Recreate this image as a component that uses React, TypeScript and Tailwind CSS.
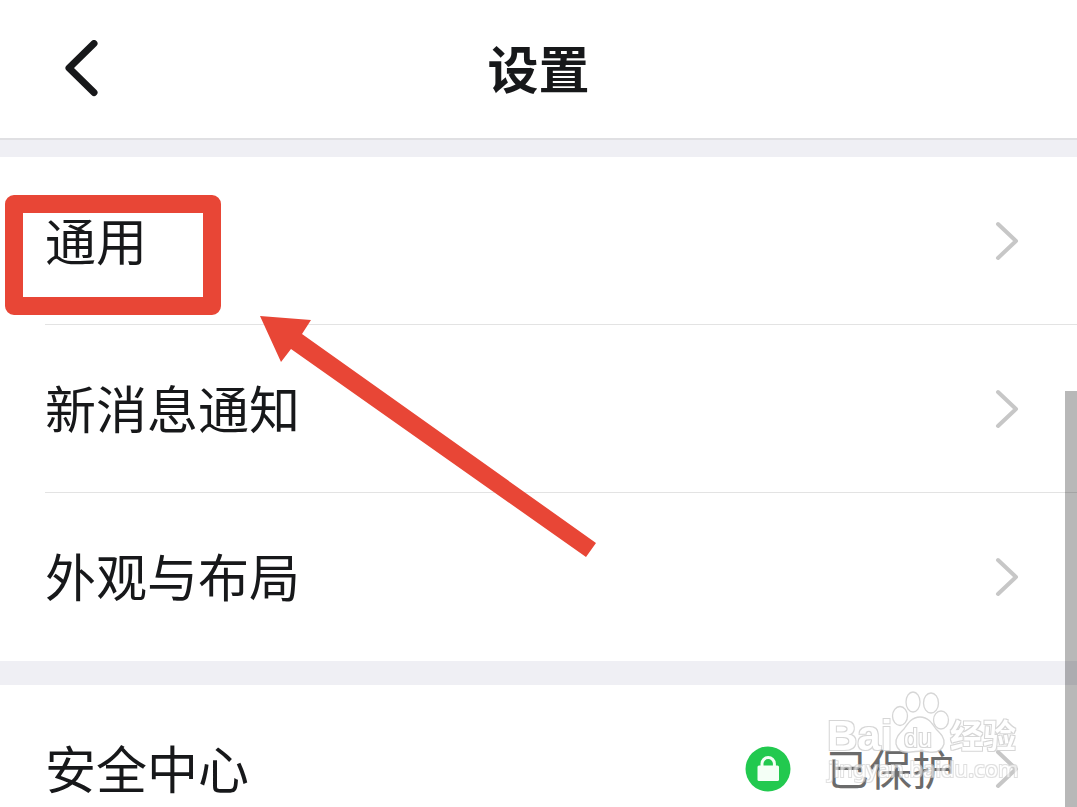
import type { ReactNode } from 'react';

const generalItems = [
  { href: '#general', title: '通用', highlighted: true },
  { href: '#notifications', title: '新消息通知' },
  { href: '#appearance', title: '外观与布局' },
];

function ChevronIcon() {
  return (
    <svg
      className="h-10 w-6 flex-shrink-0"
      viewBox="0 0 24 40"
      fill="none"
      stroke="#c7c7c7"
      strokeWidth="4"
      strokeLinecap="round"
      strokeLinejoin="round"
      aria-hidden="true"
    >
      <path d="M3 3 21 20 3 37" />
    </svg>
  );
}

function LockBadge() {
  return (
    <svg className="h-[46px] w-[46px] flex-shrink-0" viewBox="0 0 46 46" aria-hidden="true">
      <circle cx="23" cy="23" r="22.5" fill="#22c94f" />
      <rect x="12.5" y="19.5" width="21.5" height="15.5" rx="1.5" fill="#f4fff6" />
      <path d="M17 21v-3.2a6.2 6.2 0 0 1 12.4 0V21" fill="none" stroke="#f4fff6" strokeWidth="3" />
    </svg>
  );
}

function Arrow() {
  return (
    <svg
      className="pointer-events-none absolute left-[260px] top-[158px] z-10 h-[242px] w-[336px]"
      viewBox="0 0 336 242"
      aria-hidden="true"
    >
      <path d="M0 1 51 5 42 19 336 228 326 242 31 34 21 47Z" fill="#e84636" />
    </svg>
  );
}

function Watermark() {
  return (
    <svg
      className="pointer-events-none absolute right-[54px] top-0 h-[110px] w-[200px]"
      viewBox="0 0 200 110"
      fill="#ffffff"
      aria-hidden="true"
    >
      <defs>
        {/* Thin grey outline around white shapes */}
        <filter id="outline" x="-10%" y="-20%" width="120%" height="140%" colorInterpolationFilters="sRGB">
          <feMorphology in="SourceAlpha" operator="dilate" radius="1" result="grown" />
          <feFlood floodColor="#cfcfcf" />
          <feComposite in2="grown" operator="in" result="edge" />
          <feMerge>
            <feMergeNode in="edge" />
            <feMergeNode in="SourceGraphic" />
          </feMerge>
        </filter>
      </defs>
      <g
        opacity="0.85"
        fontFamily="'Liberation Sans', 'Noto Sans CJK SC', sans-serif"
        fontWeight="700"
      >
        <text x="4" y="65" fontSize="42" filter="url(#outline)">Bai</text>
        <g stroke="#cfcfcf" strokeWidth="1.3">
          <path d="M97 32c-8 0-12 6-16 12-5 5-9 9-8 15 2 8 9 9 15 8 6-1 12-1 18 0 7 1 13-1 15-8 1-6-3-10-8-15-4-6-8-12-16-12Z" />
          <ellipse cx="77" cy="31" rx="7.5" ry="9.5" />
          <ellipse cx="90" cy="17" rx="7" ry="10" />
          <ellipse cx="108" cy="18" rx="7.5" ry="10" />
          <ellipse cx="118" cy="35" rx="7.5" ry="9" />
        </g>
        <text x="81" y="62" fontSize="25" fontWeight="400" filter="url(#outline)">du</text>
        <text x="127" y="63" fontSize="33" filter="url(#outline)">经验</text>
      </g>
      <text
        x="5"
        y="92"
        fontSize="22"
        fontFamily="'Noto Sans', sans-serif"
        opacity="0.65"
        filter="url(#outline)"
      >
        jingyan.baidu.com
      </text>
    </svg>
  );
}

type SettingRowProps = {
  href: string;
  title: string;
  highlighted?: boolean;
  divider?: boolean;
  children?: ReactNode;
};

function SettingRow({ href, title, highlighted, divider, children }: SettingRowProps) {
  return (
    <li className="relative pl-[45px]">
      <a
        href={href}
        className={`flex h-[168px] items-center justify-between pr-[58px] ${
          divider ? 'border-b border-[#e3e3e3]' : ''
        }`}
      >
        <span className="pb-1 text-[51px] leading-[60px] text-[#17181a]">{title}</span>
        <span className="flex items-center gap-10">
          {children}
          <ChevronIcon />
        </span>
      </a>
      {highlighted && (
        <div className="pointer-events-none absolute left-[5px] top-[38px] h-[120px] w-[216px] rounded-[9px] border-[18px] border-[#e84636]" />
      )}
    </li>
  );
}

export default function App() {
  return (
    <div
      lang="zh-CN"
      className="relative h-screen overflow-hidden bg-[#efeff4] font-['Noto_Sans_CJK_SC',sans-serif]"
    >
      {/* Header */}
      <header className="grid h-[140px] grid-cols-3 items-center border-b-2 border-[#e0e0e3] bg-white px-16">
        <button type="button" aria-label="返回" className="justify-self-start">
          <svg
            className="h-[58px] w-9"
            viewBox="0 0 36 58"
            fill="none"
            stroke="#17181a"
            strokeWidth="7"
            strokeLinecap="round"
            strokeLinejoin="round"
          >
            <path d="M30 3.5 5 28 30 52.5" />
          </svg>
        </button>
        <h1 className="pb-1 text-center text-[51px] font-bold leading-[60px] text-[#17181a]">设置</h1>
      </header>

      <main>
        {/* General */}
        <section className="relative mt-[17px] bg-white">
          <ul>
            {generalItems.map((item, index) => (
              <SettingRow
                key={item.href}
                href={item.href}
                title={item.title}
                highlighted={item.highlighted}
                divider={index < generalItems.length - 1}
              />
            ))}
          </ul>
          <Arrow />
        </section>

        {/* Security */}
        <section className="relative mt-6 bg-white">
          <ul>
            <SettingRow href="#security" title="安全中心">
              <span className="flex items-center gap-[35px]">
                <LockBadge />
                <span className="pb-1 text-[43px] leading-[60px] text-[#6b6b6b]">已保护</span>
              </span>
            </SettingRow>
          </ul>
          <Watermark />
        </section>
      </main>

      {/* Scroll thumb */}
      <div className="absolute bottom-0 right-0 top-[391px] w-3 bg-black/28" />
    </div>
  );
}
